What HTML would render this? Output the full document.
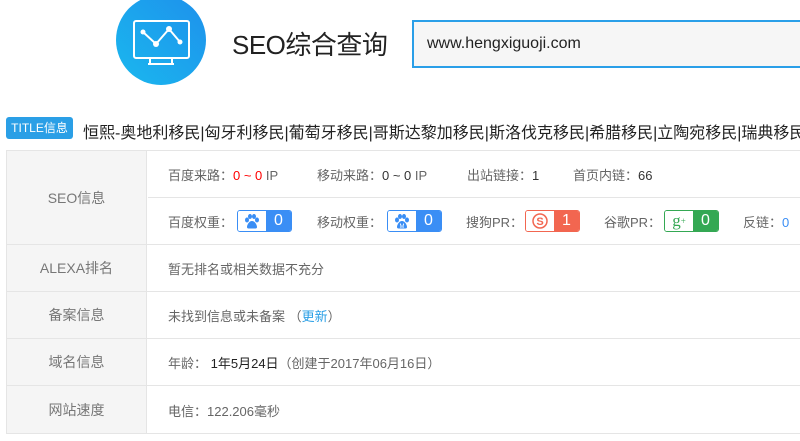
<!DOCTYPE html>
<html><head><meta charset="utf-8"><style>
*{margin:0;padding:0;box-sizing:border-box}
body{width:800px;height:441px;background:#fff;position:relative;overflow:hidden;font-family:"Liberation Sans","Noto Sans CJK SC",sans-serif;color:#666;font-size:13px}
.abs{position:absolute;white-space:nowrap}
.row{position:absolute;left:6px;width:800px;border-bottom:1px solid #e5e5e5}
.lab{position:absolute;left:0;top:0;bottom:0;width:141px;background:#f5f5f5;border-right:1px solid #e5e5e5;border-left:1px solid #e5e5e5;display:flex;align-items:center;justify-content:center;font-size:14px;color:#777}
.val{position:absolute;left:162px;font-size:13px;color:#666;white-space:nowrap}
.b{position:absolute;display:flex;height:22px;border-radius:3px;overflow:hidden;width:55px}
.b i{width:28px;background:#fff;display:flex;align-items:center;justify-content:center;font-style:normal}
.b span{flex:1;color:#fff;display:flex;align-items:center;justify-content:center;font-size:16px}
</style></head><body>
<svg class="abs" style="left:116px;top:-5px" width="90" height="90" viewBox="0 0 90 90">
<defs><linearGradient id="g" x1="1" y1="0" x2="0" y2="1"><stop offset="0" stop-color="#1e90ec"/><stop offset="1" stop-color="#1ab8ee"/></linearGradient></defs>
<circle cx="45" cy="45" r="45" fill="url(#g)"/>
<rect x="18" y="26" width="55" height="37" rx="2" fill="none" stroke="#fff" stroke-width="2"/>
<path d="M32 69h26M34 63v6M56 63v6" stroke="#fff" stroke-width="2"/>
<path d="M27 37l13 12 13-15 11 13" fill="none" stroke="#fff" stroke-width="2"/>
<circle cx="27" cy="37" r="2.5" fill="#fff"/><circle cx="40" cy="49" r="3" fill="#fff"/><circle cx="53" cy="34" r="3" fill="#fff"/><circle cx="64" cy="47" r="2.5" fill="#fff"/>
</svg>
<div class="abs" style="left:232px;top:25px;font-size:26px;color:#222;letter-spacing:-0.5px">SEO综合查询</div>
<div class="abs" style="left:412px;top:20px;width:400px;height:48px;border:2px solid #2a9fe8;background:#f6f6f6;padding:13px 0 0 13px;font-size:16px;color:#222">www.hengxiguoji.com</div>
<div class="abs" style="left:6px;top:117px;width:67px;height:22px;background:#2a9fe6;border-radius:3px;color:#fff;font-size:12px;line-height:22px;text-align:center">TITLE信息</div>
<div class="abs" style="left:83px;top:119px;font-size:16px;color:#222">恒熙-奥地利移民|匈牙利移民|葡萄牙移民|哥斯达黎加移民|斯洛伐克移民|希腊移民|立陶宛移民|瑞典移民</div>
<div class="row" style="top:150px;height:95px;border-top:1px solid #e5e5e5"><div class="lab">SEO信息</div>
<div class="abs" style="left:142px;right:0;top:46px;border-top:1px solid #e5e5e5"></div>
</div>
<div class="abs" style="left:168px;top:165px">百度来路：<span style="color:#f00">0 ~ 0</span> IP</div>
<div class="abs" style="left:317px;top:165px">移动来路：<span style="color:#333">0 ~ 0</span> IP</div>
<div class="abs" style="left:467px;top:165px">出站链接：<span style="color:#333">1</span></div>
<div class="abs" style="left:573px;top:165px">首页内链：<span style="color:#333">66</span></div>
<div class="abs" style="left:168px;top:212px">百度权重：</div>
<div class="b" style="left:237px;top:210px;border:1px solid #3a8ef5"><i><svg width="16" height="16" viewBox="0 0 16 16" fill="#3a8ef5"><ellipse cx="3" cy="7" rx="2" ry="2.5"/><ellipse cx="6" cy="3.5" rx="2" ry="2.5"/><ellipse cx="10" cy="3.5" rx="2" ry="2.5"/><ellipse cx="13" cy="7" rx="2" ry="2.5"/><path d="M8 8c-3 0-5 4-5 6s2 1.5 5 1.5 5 .5 5-1.5-2-6-5-6z"/></svg></i><span style="background:#3a8ef5">0</span></div>
<div class="abs" style="left:317px;top:212px">移动权重：</div>
<div class="b" style="left:387px;top:210px;border:1px solid #3a8ef5"><i><svg width="16" height="16" viewBox="0 0 16 16" fill="#3a8ef5"><ellipse cx="3" cy="7" rx="2" ry="2.5"/><ellipse cx="6" cy="3.5" rx="2" ry="2.5"/><ellipse cx="10" cy="3.5" rx="2" ry="2.5"/><ellipse cx="13" cy="7" rx="2" ry="2.5"/><path d="M8 8c-3 0-5 4-5 6s2 1.5 5 1.5 5 .5 5-1.5-2-6-5-6z"/><text x="8" y="15" font-size="6" fill="#fff" text-anchor="middle" font-family="Liberation Sans">M</text></svg></i><span style="background:#3a8ef5">0</span></div>
<div class="abs" style="left:466px;top:212px">搜狗PR：</div>
<div class="b" style="left:525px;top:210px;border:1px solid #f26650"><i><svg width="16" height="16" viewBox="0 0 16 16"><circle cx="8" cy="8" r="7" fill="none" stroke="#f26650" stroke-width="1.5"/><text x="8" y="12" font-size="11" fill="#f26650" text-anchor="middle" font-family="Liberation Sans" font-weight="bold">S</text></svg></i><span style="background:#f26650">1</span></div>
<div class="abs" style="left:604px;top:212px">谷歌PR：</div>
<div class="b" style="left:664px;top:210px;border:1px solid #34a853"><i style="color:#34a853;font-family:'Liberation Serif',serif;font-size:17px">g<sup style="font-size:9px">+</sup></i><span style="background:#34a853">0</span></div>
<div class="abs" style="left:743px;top:212px">反链：<span style="color:#3a8ef5">0</span></div>
<div class="row" style="top:245px;height:47px"><div class="lab">ALEXA排名</div><div class="val" style="top:14px">暂无排名或相关数据不充分</div></div>
<div class="row" style="top:292px;height:47px"><div class="lab">备案信息</div><div class="val" style="top:14px">未找到信息或未备案 （<span style="color:#2a9fe6">更新</span>）</div></div>
<div class="row" style="top:339px;height:47px"><div class="lab">域名信息</div><div class="val" style="top:14px">年龄： <span style="color:#222">1年5月24日</span>（创建于2017年06月16日）</div></div>
<div class="row" style="top:386px;height:48px"><div class="lab">网站速度</div><div class="val" style="top:15px">电信：122.206毫秒</div></div>
</body></html>
